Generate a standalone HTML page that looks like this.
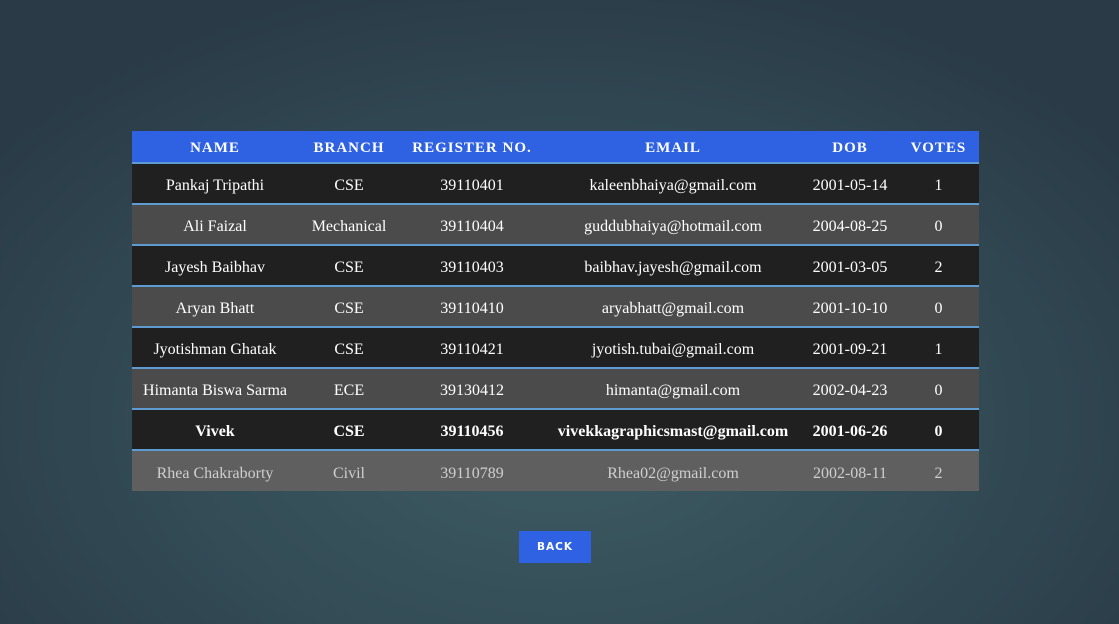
<!DOCTYPE html>
<html><head><style>
html,body{margin:0;width:1119px;height:624px;overflow:hidden}
body{background:radial-gradient(ellipse 700px 450px at 560px 420px,#3e5b62 0%,#334c56 55%,#2a3b47 100%);font-family:"Liberation Serif",serif;position:relative}
table{position:absolute;left:132px;top:131px;width:847px;border-collapse:collapse;table-layout:fixed;color:#fff;font-size:16px;text-align:center}
th{background:#2f62e3;font-weight:bold;letter-spacing:1px;font-size:15px;border-bottom:2px solid #5f9bd3;padding:3px 0 0 0;box-sizing:border-box;height:32px;vertical-align:middle}
td{padding:5px 0 0 0;box-sizing:border-box;border-bottom:2px solid #5f9bd3;height:41px}
tr.d td{background:#202020}
tr.l td{background:#4b4b4b}
tr.b td{font-weight:bold}
tr.g td{background:#5f5f5f;color:#cfcfcf;border-bottom:none;height:41px}
.btn{position:absolute;left:519px;top:531px;width:72px;height:32px;background:#2f62e3;color:#fff;font-family:"DejaVu Sans",sans-serif;font-weight:bold;font-size:10.5px;letter-spacing:1px;text-align:center;line-height:33px}
</style></head><body>
<table>
<colgroup><col style="width:166px"><col style="width:102px"><col style="width:144px"><col style="width:258px"><col style="width:96px"><col style="width:81px"></colgroup>
<tr><th>NAME</th><th>BRANCH</th><th>REGISTER NO.</th><th>EMAIL</th><th>DOB</th><th>VOTES</th></tr>
<tr class="d"><td>Pankaj Tripathi</td><td>CSE</td><td>39110401</td><td>kaleenbhaiya@gmail.com</td><td>2001-05-14</td><td>1</td></tr>
<tr class="l"><td>Ali Faizal</td><td>Mechanical</td><td>39110404</td><td>guddubhaiya@hotmail.com</td><td>2004-08-25</td><td>0</td></tr>
<tr class="d"><td>Jayesh Baibhav</td><td>CSE</td><td>39110403</td><td>baibhav.jayesh@gmail.com</td><td>2001-03-05</td><td>2</td></tr>
<tr class="l"><td>Aryan Bhatt</td><td>CSE</td><td>39110410</td><td>aryabhatt@gmail.com</td><td>2001-10-10</td><td>0</td></tr>
<tr class="d"><td>Jyotishman Ghatak</td><td>CSE</td><td>39110421</td><td>jyotish.tubai@gmail.com</td><td>2001-09-21</td><td>1</td></tr>
<tr class="l"><td>Himanta Biswa Sarma</td><td>ECE</td><td>39130412</td><td>himanta@gmail.com</td><td>2002-04-23</td><td>0</td></tr>
<tr class="d b"><td>Vivek</td><td>CSE</td><td>39110456</td><td>vivekkagraphicsmast@gmail.com</td><td>2001-06-26</td><td>0</td></tr>
<tr class="g"><td>Rhea Chakraborty</td><td>Civil</td><td>39110789</td><td>Rhea02@gmail.com</td><td>2002-08-11</td><td>2</td></tr>
</table>
<div class="btn">BACK</div>
</body></html>
